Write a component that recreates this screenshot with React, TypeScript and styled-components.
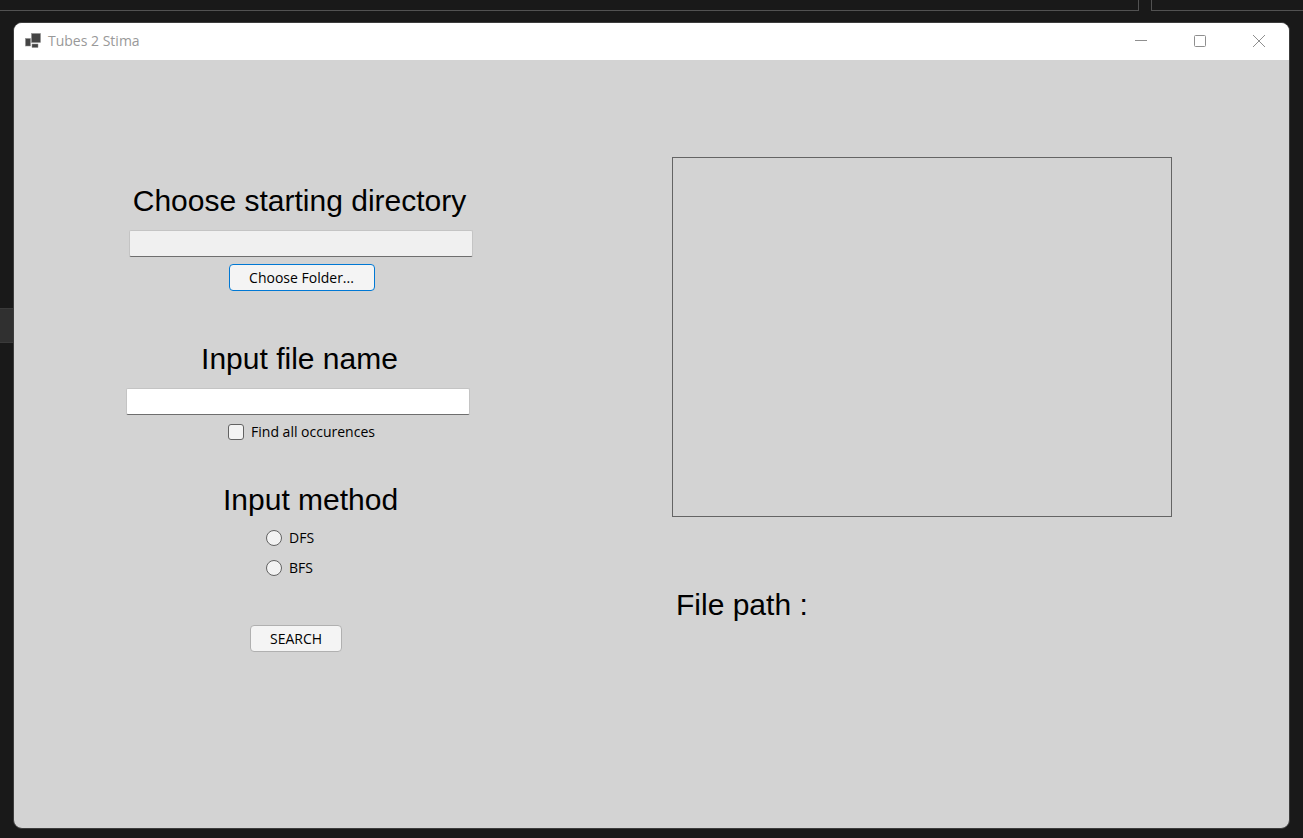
import React from "react";
import styled, { createGlobalStyle } from "styled-components";

const uiFont = `"Segoe UI", "Open Sans", "Noto Sans", sans-serif`;
const headingFont = `Arial, "Liberation Sans", sans-serif`;

const GlobalStyle = createGlobalStyle`
  *, *::before, *::after { box-sizing: border-box; }
  body { margin: 0; background: #191919; color: #000; font: 14px/20px ${uiFont}; }
`;

const Desktop = styled.div`
  display: flex;
  flex-direction: column;
  min-height: 100vh;
`;

const BackgroundPanels = styled.div`
  display: grid;
  grid-template-columns: minmax(0, 1139fr) minmax(0, 152fr);
  column-gap: 12px;
  height: 11px;
`;

const BackgroundPanel = styled.div<{ $side: "left" | "right" }>`
  border: 0 solid #525252;
  border-bottom-width: 1px;
  ${({ $side }) => ($side === "left" ? "border-right-width: 1px;" : "border-left-width: 1px;")}
`;

const Stage = styled.div`
  flex: 1;
  display: grid;
  grid-template-columns: 13px minmax(0, 1fr) 13px;
  padding: 11px 0 9px;
`;

const Gutter = styled.div`
  padding-top: 286px;
`;

const SelectedItem = styled.div`
  height: 35px;
  background: #303030;
  border: 0 solid #3a3a3a;
  border-width: 1px 0;
`;

const Window = styled.main`
  display: flex;
  flex-direction: column;
  overflow: hidden;
  border: 1px solid #3c3c3c;
  border-radius: 9px;
  background: #d3d3d3;
`;

const TitleBar = styled.header`
  display: flex;
  align-items: center;
  height: 37px;
  padding: 0 1px 2px 11px;
  background: #fff;
  color: #999;
`;

const Title = styled.h1`
  flex: 1;
  margin: 0 0 0 7px;
  font-size: 14px;
  font-weight: 400;
  line-height: 20px;
`;

const WindowButton = styled.button`
  display: flex;
  align-items: center;
  justify-content: center;
  width: 59px;
  height: 35px;
  padding: 0;
  border: 0;
  background: transparent;
  color: #8f8f8f;
`;

const Content = styled.div`
  flex: 1;
  display: grid;
  grid-template-columns: 347px minmax(0, 500px);
  justify-content: space-between;
  align-items: start;
  column-gap: 40px;
  padding: 97px 117px 40px 112px;
`;

const Form = styled.form`
  display: flex;
  flex-direction: column;
  padding-top: 27px;
`;

const Section = styled.section<{ $align?: string; $gap?: number }>`
  display: flex;
  flex-direction: column;
  align-items: ${({ $align }) => $align ?? "center"};
  margin-bottom: ${({ $gap }) => $gap ?? 0}px;
`;

const Heading = styled.label`
  font: 400 30px/34px ${headingFont};
  margin-bottom: 12px;
  white-space: nowrap;
`;

const TextBox = styled.input<{ $side: "start" | "end" }>`
  align-self: flex-${({ $side }) => $side};
  width: 344px;
  height: 27px;
  margin-bottom: 7px;
  padding: 2px 6px;
  border: 1px solid #c4c4c4;
  border-bottom-color: #6e6e6e;
  border-radius: 2px;
  outline: none;
  background: ${({ readOnly }) => (readOnly ? "#f0f0f0" : "#fff")};
  font: 14px/20px ${uiFont};
`;

const FieldOption = styled.div`
  padding-left: 4px;
`;

const Button = styled.button<{ $primary?: boolean }>`
  display: block;
  width: ${({ $primary }) => ($primary ? 146 : 92)}px;
  height: 27px;
  padding: 0;
  border: 1px solid ${({ $primary }) => ($primary ? "#0078d4" : "#b0b0b0")};
  border-radius: 4px;
  background: #f4f4f4;
  color: #000;
  font: 14px/20px ${uiFont};
`;

const Choice = styled.label`
  display: flex;
  align-items: center;
  gap: 7px;
  height: 20px;
`;

const Mark = styled.input`
  appearance: none;
  width: 16px;
  height: 16px;
  margin: 0;
  border: 1px solid #626262;
  border-radius: ${({ type }) => (type === "radio" ? "50%" : "3px")};
  background: #f3f3f3;
  &:checked { background: #0078d4; }
`;

const MethodGroup = styled.fieldset`
  display: flex;
  flex-direction: column;
  gap: 10px;
  min-width: 0;
  margin: 0 0 47px;
  padding: 0 0 0 140px;
  border: 0;
`;

const MethodTitle = styled(Heading).attrs({ as: "h2" })`
  margin: 0;
  padding: 0 0 11px 97px;
`;

const Actions = styled.div`
  padding-left: 124px;
`;

const Preview = styled.div`
  height: 360px;
  border: 1px solid #646464;
`;

const PathTitle = styled.h2`
  margin: 71px 0 0;
  padding-left: 4px;
  font: 400 30px/34px ${headingFont};
`;

const AppIcon = () => (
  <svg width="16" height="16" viewBox="0 0 16 16" aria-hidden="true">
    <g fill="#444" stroke="#8c8c8c" strokeWidth="0.5">
      <rect x="6.5" y="0.5" width="9" height="9" />
      <rect x="0.5" y="5.5" width="5" height="7.5" />
      <rect x="7" y="11" width="6" height="3.5" />
    </g>
  </svg>
);

const icons = {
  Minimize: <path d="M1 6.5h12" />,
  Maximize: <rect x="1.5" y="1.5" width="11" height="11" rx="1" />,
  Close: <path d="M1 1l12 12M13 1L1 13" />,
};

export default function App() {
  return (
    <Desktop>
      <GlobalStyle />
      <BackgroundPanels>
        <BackgroundPanel $side="left" />
        <BackgroundPanel $side="right" />
      </BackgroundPanels>
      <Stage>
        <Gutter>
          <SelectedItem />
        </Gutter>
        <Window>
          <TitleBar>
            <AppIcon />
            <Title>Tubes 2 Stima</Title>
            {Object.entries(icons).map(([name, shape]) => (
              <WindowButton key={name} type="button" aria-label={name}>
                <svg width="14" height="14" viewBox="0 0 14 14" fill="none" stroke="currentColor">
                  {shape}
                </svg>
              </WindowButton>
            ))}
          </TitleBar>
          <Content>
            <Form onSubmit={(e) => e.preventDefault()}>
              <Section $gap={51}>
                <Heading htmlFor="directory">Choose starting directory</Heading>
                <TextBox id="directory" $side="end" readOnly />
                <FieldOption>
                  <Button type="button" $primary>Choose Folder...</Button>
                </FieldOption>
              </Section>
              <Section $gap={41}>
                <Heading htmlFor="filename">Input file name</Heading>
                <TextBox id="filename" type="text" $side="start" />
                <FieldOption>
                  <Choice>
                    <Mark type="checkbox" name="all" />
                    Find all occurences
                  </Choice>
                </FieldOption>
              </Section>
              <Section $align="stretch">
                <MethodTitle id="method">Input method</MethodTitle>
                <MethodGroup aria-labelledby="method">
                  <Choice>
                    <Mark type="radio" name="method" value="dfs" />
                    DFS
                  </Choice>
                  <Choice>
                    <Mark type="radio" name="method" value="bfs" />
                    BFS
                  </Choice>
                </MethodGroup>
              </Section>
              <Actions>
                <Button type="submit">SEARCH</Button>
              </Actions>
            </Form>
            <section>
              <Preview />
              <PathTitle>File path :</PathTitle>
            </section>
          </Content>
        </Window>
      </Stage>
    </Desktop>
  );
}
